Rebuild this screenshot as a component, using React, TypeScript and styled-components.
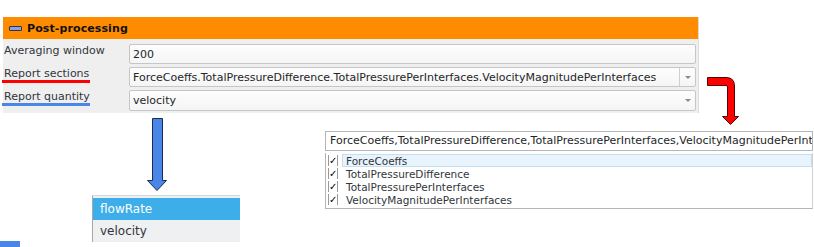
import styled, { createGlobalStyle } from "styled-components";

const GlobalStyle = createGlobalStyle`
  html, body {
    margin: 0;
    padding: 0;
    background: #ffffff;
  }
  body {
    font-family: "DejaVu Sans", "Liberation Sans", sans-serif;
    color: #31363b;
  }
`;

const sections = [
  "ForceCoeffs",
  "TotalPressureDifference",
  "TotalPressurePerInterfaces",
  "VelocityMagnitudePerInterfaces",
];

const App = () => {
  return (
    <>
      <GlobalStyle />
      <Canvas>
        <Panel>
          <PanelHeader>
            <CollapseIcon />
            <HeaderTitle>Post-processing</HeaderTitle>
          </PanelHeader>
          <PanelBody>
            <FieldLabel>Averaging window</FieldLabel>
            <Field>
              <FieldText>200</FieldText>
            </Field>

            <FieldLabel $mark="#ff0000">Report sections</FieldLabel>
            <Field>
              <FieldText>{sections.join(".")}</FieldText>
              <DropButton $separated>
                <DropArrow />
              </DropButton>
            </Field>

            <FieldLabel $mark="#4a86e8">Report quantity</FieldLabel>
            <Field $tall>
              <FieldText>velocity</FieldText>
              <DropButton>
                <DropArrow />
              </DropButton>
            </Field>
          </PanelBody>
        </Panel>

        <RedArrow width="38" height="54" viewBox="0 0 38 54">
          <path
            d="M2.5,2.5 H21 Q29.5,2.5 29.5,11 V41.5 H33.5 L25.5,49.5 L17.5,41.5 H22.5 V12 Q22.5,10.5 21,10.5 H2.5 Z"
            fill="#ff0000"
            stroke="#5a0000"
            strokeWidth="1"
          />
        </RedArrow>

        <BlueArrow width="24" height="78" viewBox="0 0 24 78">
          <path
            d="M7.5,2.5 H17.5 V64.5 H21.5 L12,74.5 L2.5,64.5 H7.5 Z"
            fill="#4a86e8"
            stroke="#1c2c50"
            strokeWidth="1"
          />
        </BlueArrow>

        <CheckPopup>
          <CheckSummary>{sections.join(",")}</CheckSummary>
          <CheckList>
            {sections.map((s, i) => (
              <CheckRow key={s}>
                <CheckBox>✓</CheckBox>
                <CheckText $current={i === 0}>{s}</CheckText>
              </CheckRow>
            ))}
          </CheckList>
        </CheckPopup>

        <QuantityPopup>
          <QuantityItem $active>flowRate</QuantityItem>
          <QuantityItem>velocity</QuantityItem>
        </QuantityPopup>

        <CornerChip />
      </Canvas>
    </>
  );
};

export default App;

const Canvas = styled.div`
  position: relative;
  width: 814px;
  height: 247px;
  overflow: hidden;
  padding-top: 17px;
  box-sizing: border-box;
`;

const Panel = styled.div`
  margin-left: 3px;
  width: 696px;
  background: #efefef;
  border-right: 1px solid #dcdcdc;
  box-sizing: border-box;
`;

const PanelHeader = styled.div`
  height: 22px;
  background: #ff8c00;
  display: flex;
  align-items: center;
  padding-left: 6px;
  gap: 5px;
`;

const CollapseIcon = styled.span`
  display: block;
  width: 11px;
  height: 3px;
  background: #8d9fdc;
  border: 1px solid #2c3350;
  border-radius: 1px;
`;

const HeaderTitle = styled.span`
  font-size: 11px;
  font-weight: bold;
  color: #111111;
  letter-spacing: 0.1px;
`;

const PanelBody = styled.div`
  display: grid;
  grid-template-columns: 125px 1fr;
  row-gap: 3px;
  padding: 5px 2px 2px 1px;
`;

const FieldLabel = styled.div<{ $mark?: string }>`
  align-self: start;
  justify-self: start;
  box-sizing: border-box;
  width: ${(p) => (p.$mark ? "88px" : "auto")};
  margin-left: -2px;
  padding-left: 2px;
  font-size: 11px;
  line-height: 13px;
  color: #31363b;
  white-space: nowrap;
  border-bottom: 3px solid ${(p) => p.$mark || "transparent"};
`;

const Field = styled.div<{ $tall?: boolean }>`
  display: flex;
  align-items: center;
  height: ${(p) => (p.$tall ? "21px" : "20px")};
  box-sizing: border-box;
  border: 1px solid #c6c6c6;
  border-radius: 2px;
  background: linear-gradient(#fdfdfd, #f5f5f5);
`;

const FieldText = styled.span`
  flex: 1;
  padding-left: 3px;
  font-size: 11px;
  color: #232627;
  white-space: nowrap;
  overflow: hidden;
`;

const DropButton = styled.div<{ $separated?: boolean }>`
  width: 15px;
  align-self: stretch;
  display: flex;
  align-items: center;
  justify-content: center;
  border-left: 1px solid ${(p) => (p.$separated ? "#cfcfcf" : "transparent")};
`;

const DropArrow = styled.span`
  width: 0;
  height: 0;
  border-left: 3px solid transparent;
  border-right: 3px solid transparent;
  border-top: 3px solid #8a8a8a;
`;

const RedArrow = styled.svg`
  position: absolute;
  left: 705px;
  top: 75px;
`;

const BlueArrow = styled.svg`
  position: absolute;
  left: 145px;
  top: 116px;
`;

const CheckPopup = styled.div`
  position: absolute;
  left: 325px;
  top: 131px;
  width: 488px;
  background: #ffffff;
`;

const CheckSummary = styled.div`
  height: 20px;
  box-sizing: border-box;
  border: 1px solid #b5b5b5;
  padding-left: 4px;
  font-size: 11px;
  line-height: 18px;
  color: #232627;
  white-space: nowrap;
  overflow: hidden;
`;

const CheckList = styled.div`
  margin-top: 2px;
  padding-top: 1px;
  padding-bottom: 2px;
  border-left: 1px solid #b5b5b5;
  border-bottom: 1px solid #b5b5b5;
  border-right: 1px solid #d0d0d0;
`;

const CheckRow = styled.div`
  display: flex;
  align-items: center;
  height: 13px;
  padding-left: 2px;
  gap: 4px;
`;

const CheckBox = styled.span`
  width: 10px;
  height: 11px;
  box-sizing: border-box;
  border-left: 1px solid #9a9a9a;
  border-right: 1px solid #9a9a9a;
  font-size: 10px;
  line-height: 11px;
  font-weight: bold;
  text-align: center;
  color: #000000;
`;

const CheckText = styled.span<{ $current?: boolean }>`
  flex: 1;
  align-self: stretch;
  display: flex;
  align-items: center;
  padding-left: 3px;
  font-size: 10.5px;
  color: #31363b;
  background: ${(p) => (p.$current ? "#e8f3fb" : "transparent")};
  border: 1px solid ${(p) => (p.$current ? "#c3dff2" : "transparent")};
  white-space: nowrap;
`;

const QuantityPopup = styled.div`
  position: absolute;
  left: 92px;
  top: 195px;
  width: 147px;
  padding-top: 2px;
  background: #eff0f1;
  border-left: 1px solid #a8a8a8;
  border-top: 1px solid #d8d8d8;
`;

const QuantityItem = styled.div<{ $active?: boolean }>`
  height: 22px;
  display: flex;
  align-items: center;
  padding-left: 7px;
  font-size: 12px;
  color: ${(p) => (p.$active ? "#ffffff" : "#31363b")};
  background: ${(p) => (p.$active ? "#3daee9" : "transparent")};
`;

const CornerChip = styled.div`
  position: absolute;
  left: 0;
  bottom: 0;
  width: 20px;
  height: 6px;
  background: #4a86e8;
`;
